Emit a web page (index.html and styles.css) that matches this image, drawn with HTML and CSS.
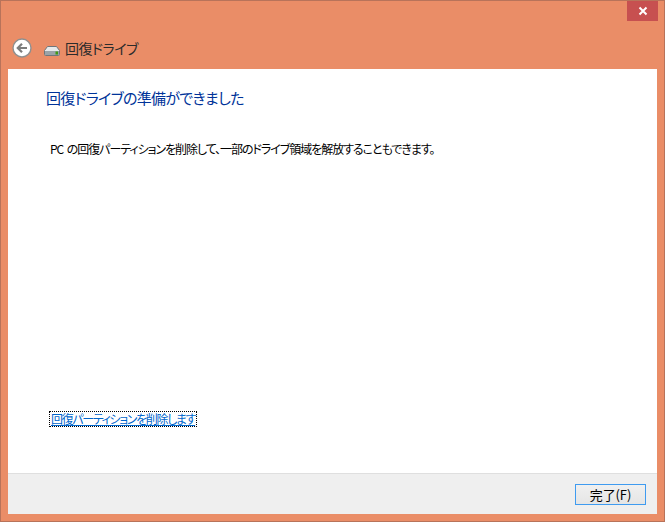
FILE: index.html
```html
<!DOCTYPE html>
<html lang="ja">
<head>
<meta charset="utf-8">
<title>回復ドライブ</title>
<link rel="stylesheet" href="styles.css">
</head>
<body>
<div class="window">
  <div class="titlebar">
    <button class="close" aria-label="閉じる">
      <svg width="10" height="10" viewBox="0 0 10 10"><path d="M1.500 1.500 8.500 8.500M8.500 1.500 1.500 8.500" stroke="#fff" stroke-width="2" fill="none"/></svg>
    </button>
  </div>
  <div class="navbar">
    <svg class="back" width="20" height="20" viewBox="0 0 20 20">
      <circle cx="10" cy="10" r="9" fill="#fff" stroke="#8f8f8f" stroke-width="1.4"/>
      <path d="M15 10H6M10 5.800 5.800 10 10 14.200" fill="none" stroke="#7d7d7d" stroke-width="2.200"/>
    </svg>
    <svg class="drive" width="16" height="10" viewBox="0 0 16 10">
      <path d="M3.500 .5H12.500L15.500 4.500V8.500A1 1 0 0 1 14.500 9.500H1.500A1 1 0 0 1 .5 8.500V4.500Z" fill="#e6e9ea" stroke="#6f767b"/>
      <rect x="1" y="5" width="14" height="4" fill="#9aa3a8"/>
      <rect x="11.500" y="5.500" width="2.500" height="3" fill="#3f9a12"/>
    </svg>
    <span class="navtitle">回復ドライブ</span>
  </div>
  <main class="panel">
    <div class="content">
      <h1 class="heading">回復ドライブの準備ができました</h1>
      <p class="message">PC の回復パーティションを削除して、一部のドライブ領域を解放することもできます。</p>
      <a class="link" href="#">回復パーティションを削除します</a>
    </div>
    <div class="footer">
      <button class="finish">完了(F)</button>
    </div>
  </main>
</div>
</body>
</html>
```
FILE: styles.css
```css
* { box-sizing: border-box; }
html, body { margin: 0; height: 100%; }
body {
  font-family: "Noto Sans CJK JP", "Noto Sans", sans-serif;
  font-feature-settings: "palt";
  overflow: hidden;
}
.window {
  width: 665px;
  height: 522px;
  background: #ea8d67;
  border: 1px solid #b8735a;
  padding: 0 7px 7px;
  display: flex;
  flex-direction: column;
}
.titlebar {
  height: 21px;
  display: flex;
  justify-content: flex-end;
}
.close {
  width: 31px;
  height: 20px;
  margin-right: -1px;
  padding: 0;
  border: 0;
  background: #c75050;
  display: flex;
  align-items: center;
  justify-content: center;
}
.navbar {
  height: 47px;
  padding: 4px 0 0 4px;
  display: flex;
  align-items: center;
}
.back { flex: none; }
.drive { flex: none; margin: 7px 0 0 12px; }
.navtitle {
  margin-left: 5px;
  font-size: 14px;
  letter-spacing: -0.5px;
  color: #2b2b2b;
}
.panel {
  flex: 1;
  min-height: 0;
  background: #fff;
  display: flex;
  flex-direction: column;
}
.content {
  flex: 1;
  padding: 18px 38px 0 38px;
  display: flex;
  flex-direction: column;
  align-items: flex-start;
}
.heading {
  margin: 0;
  font-size: 15px;
  line-height: 22px;
  font-weight: 400;
  letter-spacing: -0.7px;
  color: #003399;
}
.message {
  margin: 31px 0 0 4px;
  font-size: 12px;
  line-height: 18px;
  letter-spacing: -1.05px;
  word-spacing: 2px;
  color: #000;
}
.link {
  margin: 254px 0 0 4px;
  padding: 0 1px;
  font-size: 12px;
  line-height: 14px;
  letter-spacing: -1.35px;
  color: #0066cc;
  text-decoration: underline;
  outline: 1px dotted #000;
}
.footer {
  height: 41px;
  background: #efefef;
  border-top: 1px solid #dfdfdf;
  display: flex;
  align-items: center;
  justify-content: flex-end;
  padding: 0 11px 0 0;
}
.finish {
  width: 71px;
  height: 21px;
  margin-top: 1px;
  padding: 0;
  border: 1px solid #3f9bf0;
  background: linear-gradient(#f0f0f0, #e5e5e5);
  font: inherit;
  font-size: 13px;
  font-feature-settings: normal;
  line-height: 17px;
  letter-spacing: -0.1px;
  color: #000;
}
```
